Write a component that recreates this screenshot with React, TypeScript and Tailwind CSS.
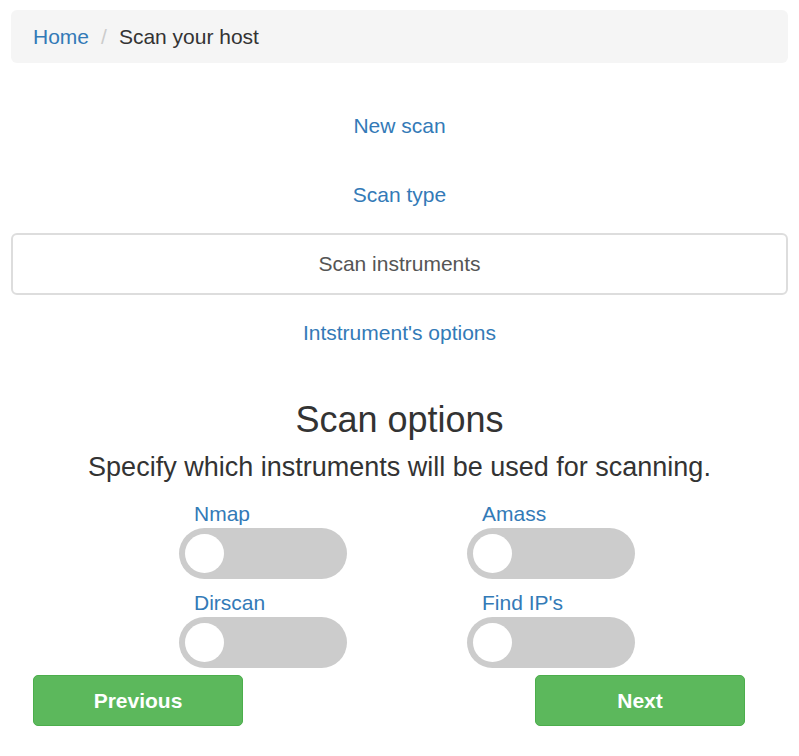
const steps = [
  { label: "New scan", active: false },
  { label: "Scan type", active: false },
  { label: "Scan instruments", active: true },
  { label: "Intstrument's options", active: false },
];

const tools = ["Nmap", "Amass", "Dirscan", "Find IP's"];

function Toggle() {
  return (
    <div className="flex h-[51px] w-[168px] items-center rounded-full bg-[#cccccc] pl-[6px]">
      <div className="h-[39px] w-[39px] rounded-full bg-white" />
    </div>
  );
}

export default function App() {
  return (
    <div className="min-h-[756px] bg-white px-[11px] pt-[10px] font-['Liberation_Sans',Arial,sans-serif] text-[#333]">
      <div className="flex h-[53px] items-center rounded-[6px] bg-[#f5f5f5] px-[22px] text-[21px] leading-[30px]">
        <a className="text-[#337ab7]">Home</a>
        <span className="px-[12px] text-[#cccccc]">/</span>
        <span className="text-[#333]">Scan your host</span>
      </div>

      <div className="mt-[32px] flex flex-col gap-[7px]">
        {steps.map((s) => (
          <div
            key={s.label}
            className={
              s.active
                ? "flex h-[62px] items-center justify-center rounded-[6px] border-2 border-[#dddddd] text-[21px] text-[#555]"
                : "flex h-[62px] items-center justify-center text-[21px] text-[#337ab7]"
            }
          >
            {s.label}
          </div>
        ))}
      </div>

      <h2 className="mt-[37px] text-center text-[36px] leading-[37px]">Scan options</h2>
      <p className="mt-[12px] text-center text-[27px] leading-[34px]">
        Specify which instruments will be used for scanning.
      </p>

      <div className="mt-[16px] grid grid-cols-[288px_288px] gap-y-[10px] pl-[168px]">
        {tools.map((t) => (
          <div key={t} className="flex flex-col">
            <span className="h-[28px] pl-[15px] text-[21px] leading-[28px] text-[#337ab7]">{t}</span>
            <Toggle />
          </div>
        ))}
      </div>

      <div className="mt-[7px] flex justify-between px-[22px]">
        <button className="h-[51px] w-[210px] rounded-[5px] border border-[#4cae4c] bg-[#5cb85c] text-[21px] font-bold text-white">
          Previous
        </button>
        <button className="mr-[21px] h-[51px] w-[210px] rounded-[5px] border border-[#4cae4c] bg-[#5cb85c] text-[21px] font-bold text-white">
          Next
        </button>
      </div>
    </div>
  );
}
